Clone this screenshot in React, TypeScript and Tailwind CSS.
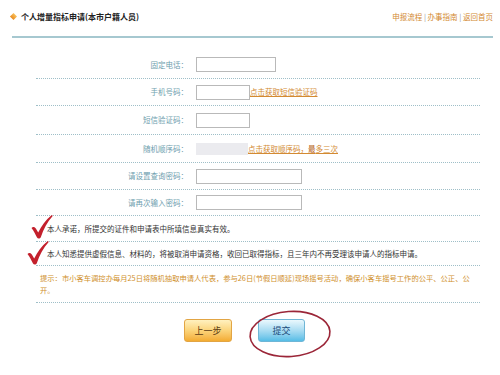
import React from "react";

const labelCls =
  "w-[152px] shrink-0 text-right text-[7.5px] leading-none text-[#6e9eae]";
const inputCls =
  "h-[15px] border border-[#b9b9b9] bg-white outline-none";
const rowCls =
  "flex items-center border-b border-dotted border-[#9fbfc8]";
const linkCls = "text-[7.5px] leading-none text-[#d38a32] underline";

const Row = ({
  label,
  h,
  children,
}: {
  label: string;
  h: string;
  children: React.ReactNode;
}) => (
  <div className={`${rowCls} ${h}`}>
    <span className={labelCls}>{label}</span>
    <div className="ml-[8px] flex items-center">{children}</div>
  </div>
);

const Check = ({ className }: { className: string }) => (
  <svg className={className} viewBox="0 0 22 24" width="22" height="24">
    <path
      d="M0.5 13 C2 11.5 3.8 12 5 13.8 L7.2 17.5 C10.5 11 14.5 5 20.5 0.3 C21.5 0 22 0.8 21.3 1.6 C16.5 7 12.5 14 9.8 22.2 C9.2 23.8 6.8 24 6 22.6 C4.5 19.3 2.8 16 0.5 13 Z"
      fill="#c3202c"
    />
  </svg>
);

const App = () => {
  return (
    <div className="relative h-[375px] w-[500px] overflow-hidden bg-white font-['Noto_Sans_CJK_SC','Noto_Sans',sans-serif]">
      {/* header */}
      <div className="flex h-[36px] items-center justify-between pb-[3px] pl-[11px] pr-[7px]">
        <div className="flex items-center">
          <span className="mr-[5px] h-[5px] w-[5px] rotate-45 bg-gradient-to-b from-[#f8c25a] to-[#e88a1c]" />
          <span className="text-[8px] font-bold leading-none text-[#222]">
            个人增量指标申请(本市户籍人员)
          </span>
        </div>
        <div className="text-[7.5px] leading-none text-[#d38a32]">
          申报流程 <span className="text-[#999]">|</span> 办事指南{" "}
          <span className="text-[#999]">|</span> 返回首页
        </div>
      </div>
      <div className="ml-[12px] h-[2px] w-[481px] bg-[#a6c8d0]" />

      {/* form */}
      <div className="ml-[36px] mt-[13px] w-[444px]">
        <Row label="固定电话：" h="h-[28px]">
          <input className={`${inputCls} w-[80px]`} />
        </Row>
        <Row label="手机号码：" h="h-[27px]">
          <input className={`${inputCls} w-[54px]`} />
          <span className={linkCls}>点击获取短信验证码</span>
        </Row>
        <Row label="短信验证码：" h="h-[29px]">
          <input className={`${inputCls} w-[54px]`} />
        </Row>
        <Row label="随机顺序码：" h="h-[28px]">
          <div className="h-[12px] w-[52px] bg-[#ebebef]" />
          <span className={linkCls}>
            点击获取顺序码，<span className="text-[#b8651a]">最</span>多三次
          </span>
        </Row>
        <Row label="请设置查询密码：" h="h-[27px]">
          <input type="password" className={`${inputCls} w-[106px]`} />
        </Row>
        <Row label="请再次输入密码：" h="h-[26px]">
          <input type="password" className={`${inputCls} w-[106px]`} />
        </Row>
        <div className={`${rowCls} h-[26px] pl-[11px]`}>
          <span className="text-[7.5px] leading-none text-[#333]">
            本人承诺，所提交的证件和申请表中所填信息真实有效。
          </span>
        </div>
        <div className={`${rowCls} h-[24px] pl-[11px]`}>
          <span className="text-[7.5px] leading-none text-[#333]">
            本人知悉提供虚假信息、材料的，将被取消申请资格，收回已取得指标，且三年内不再受理该申请人的指标申请。
          </span>
        </div>
        <div className={`${rowCls} h-[37px] pl-[4px]`}>
          <p className="text-[7.3px] leading-[12px] text-[#d0902c]">
            提示：市小客车调控办每月25日将随机抽取申请人代表，参与26日(节假日顺延)现场摇号活动，确保小客车摇号工作的公平、公正、公
            <br />
            开。
          </p>
        </div>
      </div>

      {/* buttons */}
      <div className="mt-[16px] flex gap-[26px] pl-[184px]">
        <button className="h-[23px] w-[48px] rounded-[3px] border border-[#e2a544] bg-gradient-to-b from-[#fff1bf] via-[#fbd47a] to-[#f3ac30] text-[9px] text-[#5b3b12]">
          上一步
        </button>
        <button className="h-[23px] w-[47px] rounded-[3px] border border-[#6fb6d6] bg-gradient-to-b from-[#eaf8fd] via-[#a9dcf2] to-[#55bde6] text-[9px] text-[#1d4a78]">
          提交
        </button>
      </div>

      {/* annotations */}
      <Check className="absolute left-[31px] top-[215px]" />
      <Check className="absolute left-[27px] top-[241px]" />
      <svg
        className="absolute left-[247px] top-[309px]"
        width="86"
        height="50"
        viewBox="0 0 86 50"
      >
        <ellipse
          cx="43"
          cy="25"
          rx="40"
          ry="22.5"
          fill="none"
          stroke="#9b2638"
          strokeWidth="1.6"
          transform="rotate(-4 43 25)"
        />
      </svg>
    </div>
  );
};

export default App;
